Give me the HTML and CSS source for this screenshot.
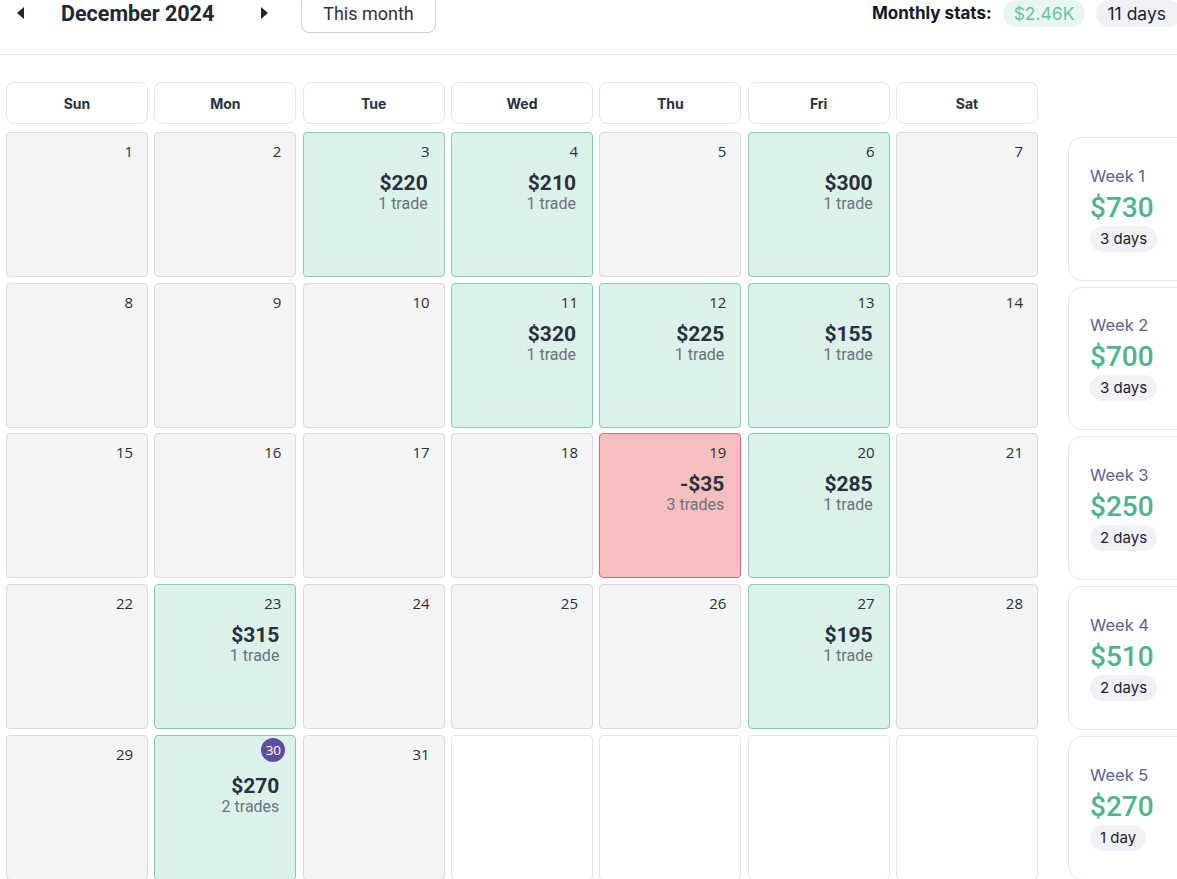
FILE: index.html
```html
<!DOCTYPE html>
<html>
<head>
<meta charset="utf-8">
<link rel="stylesheet" href="styles.css">
</head>
<body>
<header class="topbar">
  <div class="nav">
    <button class="arrow"><svg width="8" height="12" viewBox="0 0 8 12"><path d="M7 0 L0 6 L7 12 Z" fill="#222833"/></svg></button>
    <h1 class="month">December 2024</h1>
    <button class="arrow"><svg width="8" height="12" viewBox="0 0 8 12"><path d="M1 0 L8 6 L1 12 Z" fill="#222833"/></svg></button>
    <button class="this-month">This month</button>
  </div>
  <div class="stats">
    <span class="stats-label">Monthly stats:</span>
    <span class="pill pill-green">$2.46K</span>
    <span class="pill pill-gray">11 days</span>
  </div>
</header>

<main class="layout">
  <section class="calendar">
    <div class="dow">Sun</div><div class="dow">Mon</div><div class="dow">Tue</div><div class="dow">Wed</div><div class="dow">Thu</div><div class="dow">Fri</div><div class="dow">Sat</div>

    <div class="day"><span class="num">1</span></div>
    <div class="day"><span class="num">2</span></div>
    <div class="day win"><span class="num">3</span><span class="amt">$220</span><span class="trades">1 trade</span></div>
    <div class="day win"><span class="num">4</span><span class="amt">$210</span><span class="trades">1 trade</span></div>
    <div class="day"><span class="num">5</span></div>
    <div class="day win"><span class="num">6</span><span class="amt">$300</span><span class="trades">1 trade</span></div>
    <div class="day"><span class="num">7</span></div>

    <div class="day"><span class="num">8</span></div>
    <div class="day"><span class="num">9</span></div>
    <div class="day"><span class="num">10</span></div>
    <div class="day win"><span class="num">11</span><span class="amt">$320</span><span class="trades">1 trade</span></div>
    <div class="day win"><span class="num">12</span><span class="amt">$225</span><span class="trades">1 trade</span></div>
    <div class="day win"><span class="num">13</span><span class="amt">$155</span><span class="trades">1 trade</span></div>
    <div class="day"><span class="num">14</span></div>

    <div class="day"><span class="num">15</span></div>
    <div class="day"><span class="num">16</span></div>
    <div class="day"><span class="num">17</span></div>
    <div class="day"><span class="num">18</span></div>
    <div class="day loss"><span class="num">19</span><span class="amt">-$35</span><span class="trades">3 trades</span></div>
    <div class="day win"><span class="num">20</span><span class="amt">$285</span><span class="trades">1 trade</span></div>
    <div class="day"><span class="num">21</span></div>

    <div class="day"><span class="num">22</span></div>
    <div class="day win"><span class="num">23</span><span class="amt">$315</span><span class="trades">1 trade</span></div>
    <div class="day"><span class="num">24</span></div>
    <div class="day"><span class="num">25</span></div>
    <div class="day"><span class="num">26</span></div>
    <div class="day win"><span class="num">27</span><span class="amt">$195</span><span class="trades">1 trade</span></div>
    <div class="day"><span class="num">28</span></div>

    <div class="day"><span class="num">29</span></div>
    <div class="day win"><span class="num today">30</span><span class="amt">$270</span><span class="trades">2 trades</span></div>
    <div class="day"><span class="num">31</span></div>
    <div class="day blank"></div>
    <div class="day blank"></div>
    <div class="day blank"></div>
    <div class="day blank"></div>
  </section>

  <aside class="weeks">
    <div class="week"><span class="wk-label">Week 1</span><span class="wk-amt">$730</span><span class="wk-days">3 days</span></div>
    <div class="week"><span class="wk-label">Week 2</span><span class="wk-amt">$700</span><span class="wk-days">3 days</span></div>
    <div class="week"><span class="wk-label">Week 3</span><span class="wk-amt">$250</span><span class="wk-days">2 days</span></div>
    <div class="week"><span class="wk-label">Week 4</span><span class="wk-amt">$510</span><span class="wk-days">2 days</span></div>
    <div class="week"><span class="wk-label">Week 5</span><span class="wk-amt">$270</span><span class="wk-days">1 day</span></div>
  </aside>
</main>
</body>
</html>
```

FILE: styles.css
```css
* { box-sizing: border-box; }
html, body { margin: 0; padding: 0; }
body {
  width: 1177px;
  height: 879px;
  overflow: hidden;
  background: #ffffff;
  font-family: Roboto, "Liberation Sans", sans-serif;
  color: #222833;
}

.topbar {
  display: flex;
  justify-content: space-between;
  align-items: flex-start;
  margin-top: -7px;
  height: 62px;
  border-bottom: 1px solid #ececef;
  padding-left: 14px;
}
.nav {
  display: flex;
  align-items: center;
  height: 40px;
}
.arrow {
  border: 0;
  background: transparent;
  padding: 0;
  width: 14px;
  height: 20px;
  display: flex;
  align-items: center;
  justify-content: center;
}
.month {
  margin: 0 36px 0 33px;
  font-size: 21.5px;
  font-weight: 700;
  color: #222833;
  width: 160px;
  white-space: nowrap;
}
.this-month {
  margin-left: 30px;
  height: 40px;
  width: 135px;
  border: 1px solid #cfd1d6;
  border-radius: 8px;
  background: #fff;
  font-family: Roboto, "Liberation Sans", sans-serif;
  font-size: 18px;
  color: #2d3340;
  padding: 0;
}

.stats {
  display: flex;
  align-items: center;
  height: 40px;
  gap: 11px;
  margin-right: -5px;
}
.stats-label {
  font-family: Inter, "Liberation Sans", sans-serif;
  font-weight: 700;
  font-size: 17px;
  color: #141824;
  white-space: nowrap;
}
.pill {
  font-family: Inter, "Liberation Sans", sans-serif;
  font-size: 17.5px;
  height: 27px;
  line-height: 27px;
  padding: 0 11px;
  border-radius: 14px;
  white-space: nowrap;
}
.pill-green { background: #e8f6f0; color: #6cc2a2; }
.pill-gray { background: #f0f0f7; color: #1e2230; padding-right: 16px; }

.layout {
  display: flex;
  gap: 30px;
  padding: 27px 0 0 6px;
}
.calendar {
  flex: 0 0 1032px;
  width: 1032px;
  display: grid;
  grid-template-columns: repeat(7, 1fr);
  grid-template-rows: 44px;
  grid-auto-rows: 145px;
  column-gap: 6.3px;
  row-gap: 5.75px;
}
.dow {
  height: 42px;
  background: #fff;
  border: 1px solid #e3e5e8;
  border-radius: 8px;
  display: flex;
  align-items: center;
  justify-content: center;
  font-family: Inter, "Liberation Sans", sans-serif;
  font-weight: 700;
  font-size: 14px;
  color: #2a3040;
}
.day {
  background: #f3f4f6;
  border: 1px solid #d9dbde;
  border-radius: 4px;
  display: flex;
  flex-direction: column;
  align-items: flex-end;
  padding: 8px 14px 0 0;
}
.day.win { background: #dcf1ea; border-color: #84cdb2; }
.day.loss { background: #f6bfbf; border-color: #d66e6e; }
.day.blank { background: #fff; border-color: #e4e6e9; }

.num {
  font-family: "Open Sans", "Liberation Sans", sans-serif;
  font-size: 15px;
  line-height: 20px;
  color: #2b2f38;
}
.num.today {
  width: 24px;
  height: 24px;
  line-height: 24px;
  border-radius: 50%;
  background: #5f4d9e;
  color: #fff;
  text-align: center;
  font-size: 13.5px;
  margin: -6px -4px 0 0;
}
.amt {
  margin-top: 10px;
  font-family: Roboto, "Liberation Sans", sans-serif;
  font-weight: 700;
  font-size: 21px;
  line-height: 24px;
  color: #283041;
  margin-right: 2px;
}
.num.today + .amt { margin-top: 12px; }
.trades {
  font-family: Roboto, "Liberation Sans", sans-serif;
  font-size: 16px;
  line-height: 17px;
  color: #6c7280;
  margin-right: 2px;
}

.weeks {
  flex: 0 0 130px;
  display: flex;
  flex-direction: column;
  gap: 6px;
  padding-top: 55px;
}
.week {
  width: 130px;
  height: 144px;
  background: #fff;
  border: 1px solid #e5e7eb;
  border-radius: 14px;
  display: flex;
  flex-direction: column;
  align-items: flex-start;
  justify-content: center;
  padding: 0 0 2px 21px;
}
.week:nth-child(2) { height: 143px; }
.wk-label {
  font-family: Inter, "Liberation Sans", sans-serif;
  font-size: 16.5px;
  color: #5d6290;
  line-height: 22px;
}
.wk-amt {
  font-family: Roboto, "Liberation Sans", sans-serif;
  font-weight: 500;
  font-size: 28px;
  color: #4cb58f;
  line-height: 34px;
  margin-top: 4px;
}
.wk-days {
  font-family: Inter, "Liberation Sans", sans-serif;
  font-size: 15px;
  color: #1e2230;
  background: #f1f1f8;
  border-radius: 13px;
  height: 26px;
  line-height: 26px;
  padding: 0 10px;
  margin-top: 1px;
}
```
